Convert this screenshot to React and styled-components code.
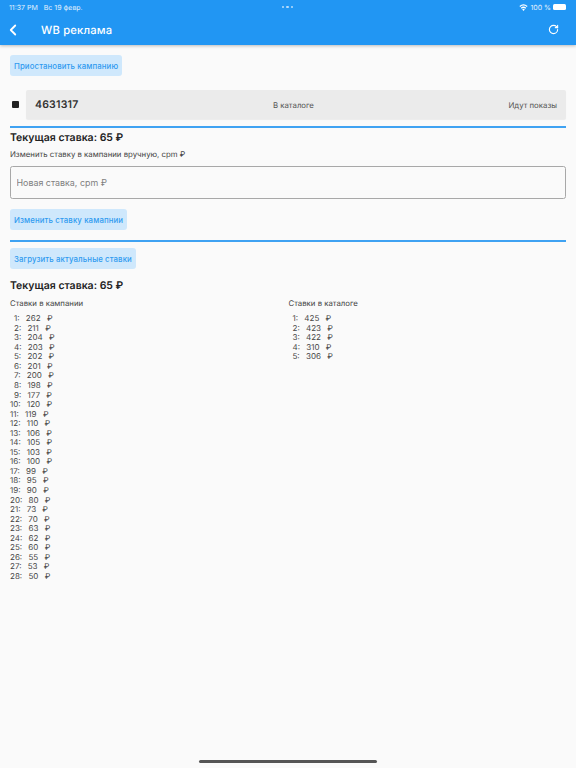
import React from 'react'
import styled, { createGlobalStyle } from 'styled-components'
import { ChevronLeft, RotateCw } from 'lucide-react'

const campaignBids = [262, 211, 204, 203, 202, 201, 200, 198, 177, 120, 119, 110, 106, 105, 103, 100, 99, 95, 90, 80, 73, 70, 63, 62, 60, 55, 53, 50]
const catalogBids = [425, 423, 422, 310, 306]

const BidList = ({ title, bids }) => (
  <div>
    <Label>{title}</Label>
    <List>
      {bids.map((bid, i) => (
        <BidRow key={i}>{`${i < 9 ? '\u2002' : ''}${i + 1}:  ${bid}  ₽`}</BidRow>
      ))}
    </List>
  </div>
)

const App = () => {
  return (
    <>
      <Global />
      <Page>
        <AppBar>
          <StatusBar>
            <StatusLeft>
              <span>11:37 PM</span>
              <span>Вс 19 февр.</span>
            </StatusLeft>
            <Dots>
              <i /><i /><i />
            </Dots>
            <StatusRight>
              <svg width="9" height="7" viewBox="0 0 18 14" fill="#fff">
                <path d="M9 14 6.4 10.8a4 4 0 0 1 5.2 0Z" />
                <path d="M5.2 9.4 3.6 7.5a8.3 8.3 0 0 1 10.8 0l-1.6 1.9a5.9 5.9 0 0 0-7.6 0Z" />
                <path d="M2.4 6 .8 4.1a12.6 12.6 0 0 1 16.4 0L15.6 6a10.2 10.2 0 0 0-13.2 0Z" />
              </svg>
              <span>100 %</span>
              <Battery />
            </StatusRight>
          </StatusBar>
          <TitleRow>
            <BackIcon size={18} strokeWidth={2.4} />
            <Title>WB реклама</Title>
            <RefreshIcon size={11} strokeWidth={2.4} />
          </TitleRow>
        </AppBar>

        <Content>
          <Button>Приостановить кампанию</Button>

          <CampaignLine>
            <Square />
            <CampaignRow>
              <CampaignId>4631317</CampaignId>
              <CampaignInfo>В каталоге</CampaignInfo>
              <CampaignInfo>Идут показы</CampaignInfo>
            </CampaignRow>
          </CampaignLine>

          <Divider $top={7} />
          <Heading $top={3.5}>Текущая ставка: 65 ₽</Heading>
          <HintLabel>Изменить ставку в кампании вручную, cpm ₽</HintLabel>
          <Input placeholder="Новая ставка, cpm ₽" />
          <Button $top={10}>Изменить ставку камапнии</Button>
          <Divider $top={10} />
          <Button $top={6.5}>Загрузить актуальные ставки</Button>
          <Heading $top={10}>Текущая ставка: 65 ₽</Heading>

          <Columns>
            <BidList title="Ставки в кампании" bids={campaignBids} />
            <BidList title="Ставки в каталоге" bids={catalogBids} />
          </Columns>
        </Content>

        <HomeBar />
      </Page>
    </>
  )
}

export default App

const Global = createGlobalStyle`
  html, body {
    margin: 0;
    padding: 0;
  }
  body {
    background: #fafafa;
    font-family: Inter, "Noto Sans", sans-serif;
    text-rendering: geometricPrecision;
  }
`

const Page = styled.div`
  position: relative;
  width: 576px;
  height: 768px;
  overflow: hidden;
  background: #fafafa;
  color: #333;
`

const AppBar = styled.header`
  height: 45px;
  background: #2196f3;
  color: #fff;
  box-shadow: 0 1px 3px rgba(0, 0, 0, 0.25);
`

const StatusBar = styled.div`
  display: grid;
  grid-template-columns: 1fr auto 1fr;
  align-items: center;
  height: 14px;
  padding: 0 10px 0 9px;
  font-size: 7px;
  color: #e3f1fd;
`

const StatusLeft = styled.div`
  display: flex;
  gap: 6px;
`

const StatusRight = styled.div`
  display: flex;
  align-items: center;
  justify-content: flex-end;
  gap: 2px;
`

const Dots = styled.div`
  display: flex;
  gap: 2px;
  > i {
    width: 2.5px;
    height: 2.5px;
    border-radius: 50%;
    background: #b9dcfa;
  }
`

const Battery = styled.div`
  width: 13px;
  height: 6px;
  border-radius: 1.5px;
  background: #fff;
`

const TitleRow = styled.div`
  display: flex;
  align-items: center;
  height: 31px;
  padding: 0 17px 0 4px;
`

const BackIcon = styled(ChevronLeft)`
  flex: none;
`

const Title = styled.div`
  margin-left: 19px;
  font-size: 11.2px;
  font-weight: 500;
  letter-spacing: 0.2px;
`

const RefreshIcon = styled(RotateCw)`
  margin-left: auto;
`

const Content = styled.main`
  display: flex;
  flex-direction: column;
  align-items: flex-start;
  padding: 10px 10px 0;
`

const Button = styled.button`
  height: 21px;
  margin-top: ${(p) => p.$top || 0}px;
  padding: 0 4px;
  border: none;
  border-radius: 3px;
  background: #cfe8fc;
  color: #2f9bf0;
  font-family: inherit;
  font-size: 7.8px;
  font-weight: 500;
  letter-spacing: 0.12px;
`

const CampaignLine = styled.div`
  display: flex;
  align-items: center;
  align-self: stretch;
  margin-top: 14px;
`

const Square = styled.div`
  flex: none;
  width: 7px;
  height: 7px;
  margin: 0 7px 0 2px;
  background: #222;
  border-radius: 1px;
`

const CampaignRow = styled.div`
  flex: 1;
  display: flex;
  justify-content: space-between;
  align-items: center;
  height: 29px;
  padding: 0 9px;
  background: #ebebeb;
  border-radius: 2px;
  box-shadow: 0 1px 1px rgba(0, 0, 0, 0.06);
`

const CampaignId = styled.div`
  font-size: 10.5px;
  font-weight: 600;
  letter-spacing: 0.2px;
`

const CampaignInfo = styled.div`
  font-size: 7.8px;
  color: #555;
`

const Divider = styled.hr`
  align-self: stretch;
  height: 1.5px;
  margin: ${(p) => p.$top}px 0 0;
  border: none;
  background: #3fa2f2;
`

const Heading = styled.h2`
  margin: ${(p) => p.$top}px 0 0;
  font-size: 10.5px;
  line-height: 14px;
  font-weight: 600;
  color: #222;
`

const Label = styled.div`
  font-size: 7.8px;
  line-height: 11px;
  color: #444;
`

const HintLabel = styled(Label)`
  margin-top: 3.5px;
`

const Input = styled.input`
  box-sizing: border-box;
  align-self: stretch;
  height: 33px;
  margin-top: 6.5px;
  padding: 0 5.5px;
  border: 1px solid #a8a8a8;
  border-radius: 2.5px;
  background: transparent;
  font-family: inherit;
  font-size: 8.9px;
  outline: none;
  &::placeholder {
    color: #808080;
  }
`

const Columns = styled.div`
  align-self: stretch;
  display: grid;
  grid-template-columns: 278.5px 1fr;
  margin-top: 4.5px;
`

const List = styled.div`
  display: flex;
  flex-direction: column;
  margin-top: 5.7px;
`

const BidRow = styled.div`
  font-size: 8px;
  line-height: 9.56px;
  height: 9.56px;
  color: #444;
  white-space: pre;
  word-spacing: 0.9px;
`

const HomeBar = styled.div`
  position: absolute;
  left: 199px;
  bottom: 5px;
  width: 178px;
  height: 3px;
  border-radius: 2px;
  background: #555;
`
